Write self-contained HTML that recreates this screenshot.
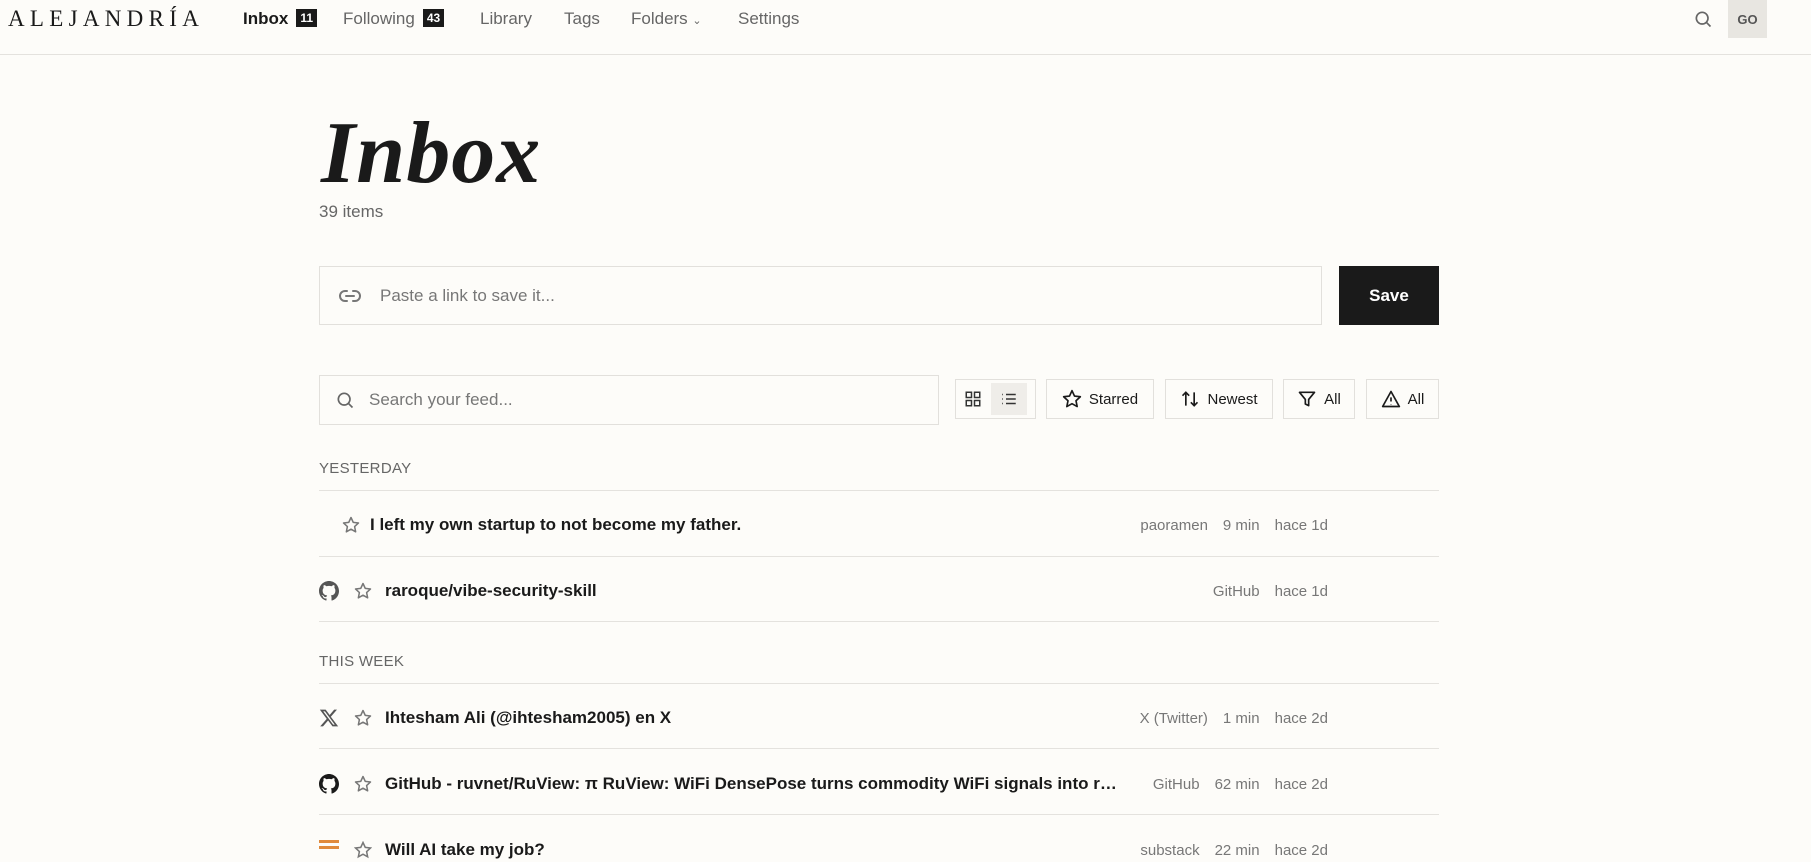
<!DOCTYPE html>
<html><head><meta charset="utf-8"><style>
*{margin:0;padding:0;box-sizing:border-box}
body{width:1811px;height:846px;overflow:hidden;background:#fdfcf9;font-family:"Liberation Sans",sans-serif;color:#1a1a1a;position:relative}
.a{position:absolute}
.nav{font-size:17px;color:#666;top:9px}
.badge{display:inline-block;background:#1a1a1a;color:#fff;font-size:12px;font-weight:bold;padding:2px 4px;margin-left:8px;vertical-align:2px}
.box{border:1px solid #e2e0dc;background:#fdfcf9}
.btn{border:1px solid #e2e0dc;height:40px;top:379px;display:flex;align-items:center;justify-content:center;gap:7px;font-size:15px;color:#1a1a1a}
.sec{font-size:15px;color:#666;letter-spacing:.3px;left:319px}
.line{left:319px;width:1120px;height:1px;background:#e4e2de}
.row{left:319px;width:1120px;height:24px;display:flex;align-items:center;font-size:17px;font-weight:bold;color:#1a1a1a}
.t{white-space:nowrap;overflow:hidden;text-overflow:ellipsis;max-width:737px}
.meta{position:absolute;right:111px;font-size:15px;color:#777;font-weight:normal;display:flex;gap:15px}
svg{flex:none}
</style></head><body>
<div class="a" style="left:8px;top:6px;font-family:'Liberation Serif',serif;font-size:23px;letter-spacing:5.3px;color:#1a1a1a">ALEJANDRÍA</div>
<div class="a nav" style="left:243px;color:#1a1a1a;font-weight:bold">Inbox<span class="badge">11</span></div>
<div class="a nav" style="left:343px">Following<span class="badge">43</span></div>
<div class="a nav" style="left:480px">Library</div>
<div class="a nav" style="left:564px">Tags</div>
<div class="a nav" style="left:631px">Folders <span style="font-size:11px">&#8964;</span></div>
<div class="a nav" style="left:738px">Settings</div>
<svg class="a" style="left:1693px;top:9px" width="20" height="20" viewBox="0 0 24 24" fill="none" stroke="#666" stroke-width="2"><circle cx="11" cy="11" r="7"/><path d="M16 16l5 5"/></svg>
<div class="a" style="left:1728px;top:0;width:39px;height:38px;background:#e8e6e1;color:#555;font-size:13px;font-weight:bold;display:flex;align-items:center;justify-content:center">GO</div>
<div class="a" style="left:0;top:54px;width:1811px;height:1px;background:#e4e2de"></div>

<div class="a" style="left:321px;top:110px;font-family:'Liberation Serif',serif;font-style:italic;font-weight:bold;font-size:88px;letter-spacing:1px;line-height:1">Inbox</div>
<div class="a" style="left:319px;top:202px;font-size:17px;color:#666">39 items</div>

<div class="a box" style="left:319px;top:266px;width:1003px;height:59px;display:flex;align-items:center;padding-left:18px;gap:18px;font-size:17px;color:#777">
<svg width="24" height="24" viewBox="0 0 24 24" fill="none" stroke="#777" stroke-width="2" stroke-linecap="round"><path d="M9 17H7A5 5 0 0 1 7 7h2M15 7h2a5 5 0 0 1 0 10h-2M8 12h8"/></svg>Paste a link to save it...</div>
<div class="a" style="left:1339px;top:266px;width:100px;height:59px;background:#1a1a1a;color:#fff;font-size:17px;font-weight:bold;display:flex;align-items:center;justify-content:center">Save</div>

<div class="a box" style="left:319px;top:375px;width:620px;height:50px;display:flex;align-items:center;padding-left:15px;gap:14px;font-size:17px;color:#777">
<svg width="20" height="20" viewBox="0 0 24 24" fill="none" stroke="#666" stroke-width="2"><circle cx="11" cy="11" r="7"/><path d="M16 16l5 5"/></svg>Search your feed...</div>
<div class="a btn" style="left:955px;width:81px;gap:0;justify-content:space-around;padding:3px">
<svg width="18" height="18" viewBox="0 0 24 24" fill="none" stroke="#333" stroke-width="2"><rect x="3" y="3" width="7" height="7"/><rect x="14" y="3" width="7" height="7"/><rect x="3" y="14" width="7" height="7"/><rect x="14" y="14" width="7" height="7"/></svg>
<div style="background:#efede9;width:36px;height:32px;display:flex;align-items:center;justify-content:center"><svg width="18" height="18" viewBox="0 0 24 24" fill="none" stroke="#333" stroke-width="2"><path d="M8 6h13M8 12h13M8 18h13M3 6h1M3 12h1M3 18h1"/></svg></div></div>
<div class="a btn" style="left:1046px;width:108px"><svg width="20" height="20" viewBox="0 0 24 24" fill="none" stroke="#1a1a1a" stroke-width="2" stroke-linejoin="round"><path d="M12 2l3 6.5 7 .8-5.2 4.8 1.4 7L12 17.6 5.8 21.1l1.4-7L2 9.3l7-.8z"/></svg>Starred</div>
<div class="a btn" style="left:1165px;width:108px"><svg width="20" height="20" viewBox="0 0 24 24" fill="none" stroke="#1a1a1a" stroke-width="2"><path d="M7 20V4M3 8l4-4 4 4M17 4v16M13 16l4 4 4-4"/></svg>Newest</div>
<div class="a btn" style="left:1283px;width:72px"><svg width="20" height="20" viewBox="0 0 24 24" fill="none" stroke="#1a1a1a" stroke-width="2" stroke-linejoin="round"><path d="M3 4h18l-7 8.5V20l-4-2v-5.5z"/></svg>All</div>
<div class="a btn" style="left:1366px;width:73px"><svg width="20" height="20" viewBox="0 0 24 24" fill="none" stroke="#1a1a1a" stroke-width="2" stroke-linejoin="round"><path d="M12 3l10 18H2zM12 10v5M12 18v.5"/></svg>All</div>

<div class="a sec" style="top:460px">YESTERDAY</div>
<div class="a line" style="top:490px"></div>

<div class="a row" style="top:513px;padding-left:23px">
<svg width="18" height="18" viewBox="0 0 24 24" fill="none" stroke="#777" stroke-width="2" stroke-linejoin="round"><path d="M12 2l3 6.5 7 .8-5.2 4.8 1.4 7L12 17.6 5.8 21.1l1.4-7L2 9.3l7-.8z"/></svg>
<span class="t" style="margin-left:10px">I left my own startup to not become my father.</span>
<div class="meta"><span>paoramen</span><span>9 min</span><span>hace 1d</span></div></div>
<div class="a line" style="top:556px"></div>

<div class="a row" style="top:579px">
<svg width="20" height="20" viewBox="0 0 16 16" fill="#555"><path d="M8 0C3.58 0 0 3.58 0 8c0 3.54 2.29 6.53 5.47 7.59.4.07.55-.17.55-.38v-1.33c-2.23.48-2.7-1.07-2.7-1.07-.36-.92-.89-1.17-.89-1.17-.73-.5.06-.49.06-.49.8.06 1.23.83 1.23.83.72 1.22 1.87.87 2.33.66.07-.52.28-.87.5-1.07-1.78-.2-3.64-.89-3.64-3.95 0-.87.31-1.59.82-2.15-.08-.2-.36-1.02.08-2.12 0 0 .67-.21 2.2.82a7.6 7.6 0 0 1 4 0c1.53-1.04 2.2-.82 2.2-.82.44 1.1.16 1.92.08 2.12.51.56.82 1.27.82 2.15 0 3.07-1.87 3.75-3.65 3.95.29.25.54.73.54 1.48v2.2c0 .21.15.46.55.38A8 8 0 0 0 16 8c0-4.42-3.58-8-8-8z"/></svg>
<svg style="margin-left:15px" width="18" height="18" viewBox="0 0 24 24" fill="none" stroke="#777" stroke-width="2" stroke-linejoin="round"><path d="M12 2l3 6.5 7 .8-5.2 4.8 1.4 7L12 17.6 5.8 21.1l1.4-7L2 9.3l7-.8z"/></svg>
<span class="t" style="margin-left:13px">raroque/vibe-security-skill</span>
<div class="meta"><span>GitHub</span><span>hace 1d</span></div></div>
<div class="a line" style="top:621px"></div>

<div class="a sec" style="top:653px">THIS WEEK</div>
<div class="a line" style="top:683px"></div>

<div class="a row" style="top:706px">
<svg width="20" height="20" viewBox="0 0 24 24" fill="#555"><path d="M18.2 2h3.4l-7.4 8.5L23 22h-6.8l-5.3-7-6.1 7H1.4l7.9-9L1 2h7l4.8 6.4zm-1.2 18h1.9L7.1 4H5.1z"/></svg>
<svg style="margin-left:15px" width="18" height="18" viewBox="0 0 24 24" fill="none" stroke="#777" stroke-width="2" stroke-linejoin="round"><path d="M12 2l3 6.5 7 .8-5.2 4.8 1.4 7L12 17.6 5.8 21.1l1.4-7L2 9.3l7-.8z"/></svg>
<span class="t" style="margin-left:13px">Ihtesham Ali (@ihtesham2005) en X</span>
<div class="meta"><span>X (Twitter)</span><span>1 min</span><span>hace 2d</span></div></div>
<div class="a line" style="top:748px"></div>

<div class="a row" style="top:772px">
<svg width="20" height="20" viewBox="0 0 16 16" fill="#1a1a1a"><path d="M8 0C3.58 0 0 3.58 0 8c0 3.54 2.29 6.53 5.47 7.59.4.07.55-.17.55-.38v-1.33c-2.23.48-2.7-1.07-2.7-1.07-.36-.92-.89-1.17-.89-1.17-.73-.5.06-.49.06-.49.8.06 1.23.83 1.23.83.72 1.22 1.87.87 2.33.66.07-.52.28-.87.5-1.07-1.78-.2-3.64-.89-3.64-3.95 0-.87.31-1.59.82-2.15-.08-.2-.36-1.02.08-2.12 0 0 .67-.21 2.2.82a7.6 7.6 0 0 1 4 0c1.53-1.04 2.2-.82 2.2-.82.44 1.1.16 1.92.08 2.12.51.56.82 1.27.82 2.15 0 3.07-1.87 3.75-3.65 3.95.29.25.54.73.54 1.48v2.2c0 .21.15.46.55.38A8 8 0 0 0 16 8c0-4.42-3.58-8-8-8z"/></svg>
<svg style="margin-left:15px" width="18" height="18" viewBox="0 0 24 24" fill="none" stroke="#777" stroke-width="2" stroke-linejoin="round"><path d="M12 2l3 6.5 7 .8-5.2 4.8 1.4 7L12 17.6 5.8 21.1l1.4-7L2 9.3l7-.8z"/></svg>
<span class="t" style="margin-left:13px">GitHub - ruvnet/RuView: π RuView: WiFi DensePose turns commodity WiFi signals into real-time human pose estimation</span>
<div class="meta"><span>GitHub</span><span>62 min</span><span>hace 2d</span></div></div>
<div class="a line" style="top:814px"></div>

<div class="a row" style="top:838px">
<div style="width:20px;height:20px;border-top:3px solid #e08a3c;padding-top:3px"><div style="border-top:3px solid #e08a3c"></div></div>
<svg style="margin-left:15px" width="18" height="18" viewBox="0 0 24 24" fill="none" stroke="#777" stroke-width="2"><path d="M12 2l3 6.5 7 .8-5.2 4.8 1.4 7L12 17.6 5.8 21.1l1.4-7L2 9.3l7-.8z"/></svg>
<span class="t" style="margin-left:13px">Will AI take my job?</span>
<div class="meta"><span>substack</span><span>22 min</span><span>hace 2d</span></div></div>
</body></html>
